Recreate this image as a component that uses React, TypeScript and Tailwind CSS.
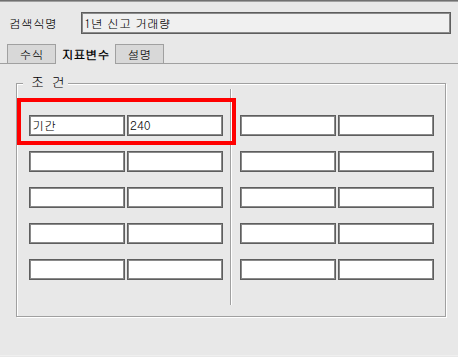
const FONT = "font-['Gulim','Noto_Sans_CJK_KR','Noto_Sans',sans-serif]";

const rows = [
  ['기간', '240'],
  ['', ''],
  ['', ''],
  ['', ''],
  ['', ''],
];

function Field({ value }: { value: string }) {
  return (
    <div className="flex h-[21px] w-[96px] items-start border border-[#5e5e5e] bg-white pl-[2px] pt-[1px] text-[12px] leading-[15px] text-black shadow-[inset_0_0_0_1px_#8a8a8a]">
      {value}
    </div>
  );
}

function Column({ values }: { values: string[][] }) {
  return (
    <div className="flex flex-col gap-[15px] pt-[26px]">
      {values.map((row, i) => (
        <div key={i} className="flex gap-[2px]">
          <Field value={row[0]} />
          <Field value={row[1]} />
        </div>
      ))}
    </div>
  );
}

export default function App() {
  return (
    <div className={`h-[357px] w-[458px] overflow-hidden bg-[#e8e8e8] ${FONT} text-[12px] text-black`}>
      <div className="h-[1px] bg-[#707070]" />
      <div className="h-[1px] bg-[#a0a0a0]" />

      {/* 검색식명 */}
      <div className="mt-[10px] flex items-center">
        <span className="ml-[9px] w-[72px] leading-[14px]">검색식명</span>
        <div className="flex h-[22px] w-[370px] items-center border border-[#5e5e5e] bg-[#f0f0f0] pl-[2px] leading-[14px] shadow-[inset_0_0_0_1px_#8a8a8a]">
          1년 신고 거래량
        </div>
      </div>

      {/* Tabs */}
      <div className="mt-[10px] flex h-[20px]">
        <div className="w-[7px] border-b border-[#a0a0a0]" />
        <div className="flex w-[49px] items-center justify-center border border-[#a0a0a0] bg-[#d8d8d8] leading-[14px]">
          수식
        </div>
        <div className="flex w-[59px] items-center justify-center font-bold leading-[14px]">
          지표변수
        </div>
        <div className="flex w-[49px] items-center justify-center border border-[#a0a0a0] bg-[#d8d8d8] leading-[14px]">
          설명
        </div>
        <div className="flex-1 border-b border-[#a0a0a0]" />
      </div>

      {/* 조건 group */}
      <div className="relative ml-[16px] mt-[19px] h-[234px] w-[430px] border border-[#a0a0a0] shadow-[1px_1px_0_#ffffff,inset_1px_1px_0_#ffffff]">
        <div className="absolute left-[6px] top-[-9px] flex h-[14px] w-[45px] items-center gap-[8px] bg-[#e8e8e8] pl-[8px] text-[13px] leading-[14px]">
          <span>조</span>
          <span>건</span>
        </div>

        <div className="flex pl-[12px] pt-[5px]">
          <Column values={rows} />
          <div className="ml-[7px] mr-[8px] h-[216px] w-[2px] border-l border-[#a0a0a0] bg-white" />
          <Column values={rows.map(() => ['', ''])} />
        </div>

        {/* highlight */}
        <div className="pointer-events-none absolute left-[0px] top-[14px] h-[47px] w-[219px] border-4 border-[#ff0000]" />
      </div>

      <div className="mt-[38px] h-[1px] bg-[#efefef]" />
    </div>
  );
}
